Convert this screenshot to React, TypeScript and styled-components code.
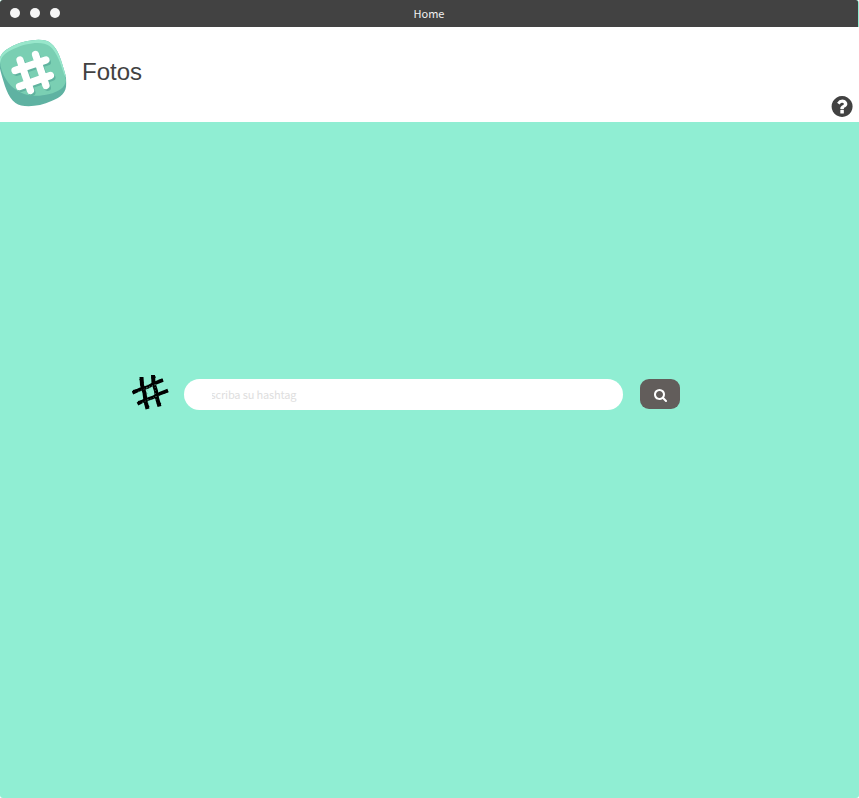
import React from 'react';
import styled, { createGlobalStyle } from 'styled-components';

const GlobalStyle = createGlobalStyle`
  * { box-sizing: border-box; }
  html, body, #root { margin: 0; height: 100%; }
  body { background: #fff; overflow: hidden; }
`;

const Window = styled.div`
  height: 100vh;
  display: flex;
  flex-direction: column;
  border-radius: 3px;
  overflow: hidden;
  background: #90eed3;
`;

const TitleBar = styled.header`
  height: 27px;
  flex: none;
  display: grid;
  grid-template-columns: 1fr auto 1fr;
  align-items: center;
  margin-right: 1px;
  padding: 0 10px;
  background: #424242;
  border-radius: 2px 2px 0 0;
`;

const WindowDots = styled.div`
  display: flex;
  gap: 10px;
  margin-top: -2px;
`;

const Dot = styled.span`
  width: 10px;
  height: 10px;
  border-radius: 50%;
  background: #f5f5f5;
`;

const WindowTitle = styled.span`
  margin-top: -2px;
  font: 11px/16px "Noto Sans CJK SC", sans-serif;
  letter-spacing: -0.05px;
  color: #f1f1f1;
`;

const Banner = styled.div`
  height: 95px;
  flex: none;
  display: flex;
  justify-content: space-between;
  background: #fff;
`;

const Brand = styled.div`
  display: flex;
  align-items: flex-start;
  gap: 14px;
  padding-top: 12px;
`;

const Heading = styled.h1`
  margin: 19px 0 0;
  font: 400 24px/28px "Liberation Sans", Arial, sans-serif;
  color: #424242;
`;

const HelpButton = styled.button`
  align-self: flex-end;
  margin: 0 6px 5px 0;
  padding: 0;
  border: 0;
  background: none;
  svg { display: block; }
`;

const Content = styled.main`
  flex: 1;
  padding: 252px 0 0 132px;
`;

const SearchForm = styled.form`
  display: flex;
  align-items: flex-start;
  svg { display: block; }
`;

const Field = styled.div`
  width: 439px;
  height: 31px;
  margin: 5px 17px 0 15px;
  padding: 0 28px;
  border-radius: 15.5px;
  background: #fff;
`;

const Placeholder = styled.div`
  height: 31px;
  overflow: hidden;
  font: 11px/31px "Noto Sans CJK SC", sans-serif;
  color: #dedede;
  white-space: nowrap;
  text-indent: -1.5px;
  letter-spacing: -0.16px;
`;

const SearchButton = styled.button`
  width: 40px;
  height: 30px;
  margin-top: 5px;
  padding: 2px 0 0 1px;
  border: 0;
  border-radius: 9px;
  background: #625d5b;
  display: flex;
  align-items: center;
  justify-content: center;
`;

const Logo = () => (
  <svg width="68" height="68" viewBox="0.5 39 68 68" fill="none">
    <defs>
      <clipPath id="tile">
        <path d="M14 45.500C27 39.500 45 37.500 51 43C59 49 62 61 66 75C69 91 64 96 52 101C39 107 23 108 16 103C8 97 5 85 1 71C-2 57 1 52 14 45.500Z" />
      </clipPath>
    </defs>
    <g clipPath="url(#tile)">
      <path fill="#5fb2a2" d="M0 39h68v68H0z" />
      <path fill="#98e7cb" d="M0 39h68v40L50 60H2L0 66z" />
      <path fill="#7acfb3" d="M15 48.500C26 43 43 40.500 50 46C58 52 62 66 66.500 80C66 88 58 92 50 94C36 97.500 24 96 14 88C7 82 3 74 1 66C0 57 5 53 15 48.500Z" />
    </g>
    <g stroke="#60b39f" strokeWidth="7" strokeLinecap="round" transform="translate(1.500 1.500)">
      <path d="M20.500 60.500L31 91M36 55L46.500 86M15.500 71L46.500 60.500M20 87L51 76" />
    </g>
    <path stroke="#fff" strokeWidth="7.200" strokeLinecap="round" d="M20.500 60L31 90.500M36 54.500L46.500 85.500M15.500 70.500L46.500 60M20 86.500L51 75.500" />
  </svg>
);

const BrushHash = () => (
  <svg width="37" height="37" viewBox="132 374 37 37" fill="none" stroke="#000">
    <path strokeWidth="4" d="M141.500 377L142 385L144.500 393L145.500 401L147.500 409M153 375L153.500 383L156 391L157 398L159.500 406.500" />
    <path strokeWidth="3.500" d="M132.500 393L140 389.500L148 387L154 383.500L163 380M137.500 404L145 400L153 397.500L160 393.500L168 390.500" />
    <path strokeWidth="2" d="M140 379l3 4M145 404l4 3M151.500 378l4-1M157 403l4 1M133 391l5-1M158 381l5-1M138 402l5-1M163 393l5-2" />
    <path stroke="#65a994" strokeWidth=".5" strokeDasharray="1 2" d="M138 391.500l18-7M146 388l9-3M142 402.500l17-7M147 384l1 20M155 384l1 18" />
  </svg>
);

const HelpIcon = () => (
  <svg width="21" height="21" viewBox="158 128 1536 1536" fill="#424242" overflow="visible">
    <path d="M1024 1376v-192q0-14-9-23t-23-9h-192q-14 0-23 9t-9 23v192q0 14 9 23t23 9h192q14 0 23-9t9-23zm256-672q0-88-55.500-163t-138.500-116-170-41q-243 0-371 213-15 24 8 42l132 100q7 6 19 6 16 0 25-12 53-68 86-92 34-24 86-24 48 0 85.500 26t37.500 59q0 38-20 61t-68 45q-63 28-115.500 86.500t-52.500 125.500v36q0 14 9 23t23 9h192q14 0 23-9t9-23q0-19 21.500-49.500t54.500-49.500q32-18 49-28.500t46-35 44.500-48 28-60.500 12.500-81zm384 192q0 209-103 385.500t-279.500 279.500-385.500 103-385.500-103-279.500-279.500-103-385.500 103-385.500 279.500-279.500 385.500-103 385.500 103 279.500 279.500 103 385.500z" />
  </svg>
);

const SearchIcon = () => (
  <svg width="13" height="13" viewBox="64 128 1664 1664" fill="#fff">
    <path d="M1216 832q0-185-131.500-316.500t-316.500-131.500-316.500 131.500-131.500 316.500 131.500 316.500 316.500 131.500 316.500-131.500 131.500-316.500zm512 832q0 52-38 90t-90 38q-54 0-90-38l-343-342q-179 124-399 124-143 0-273.500-55.500t-225-150-150-225-55.500-273.500 55.500-273.500 150-225 225-150 273.500-55.500 273.500 55.500 225 150 150 225 55.500 273.500q0 220-124 399l343 343q37 37 37 90z" />
  </svg>
);

export default function App() {
  return (
    <>
      <GlobalStyle />
      <Window>
        <TitleBar>
          <WindowDots><Dot /><Dot /><Dot /></WindowDots>
          <WindowTitle>Home</WindowTitle>
        </TitleBar>
        <Banner>
          <Brand>
            <Logo />
            <Heading>Fotos</Heading>
          </Brand>
          <HelpButton type="button"><HelpIcon /></HelpButton>
        </Banner>
        <Content>
          <SearchForm onSubmit={(e) => e.preventDefault()}>
            <BrushHash />
            <Field><Placeholder>scriba su hashtag</Placeholder></Field>
            <SearchButton type="submit"><SearchIcon /></SearchButton>
          </SearchForm>
        </Content>
      </Window>
    </>
  );
}
